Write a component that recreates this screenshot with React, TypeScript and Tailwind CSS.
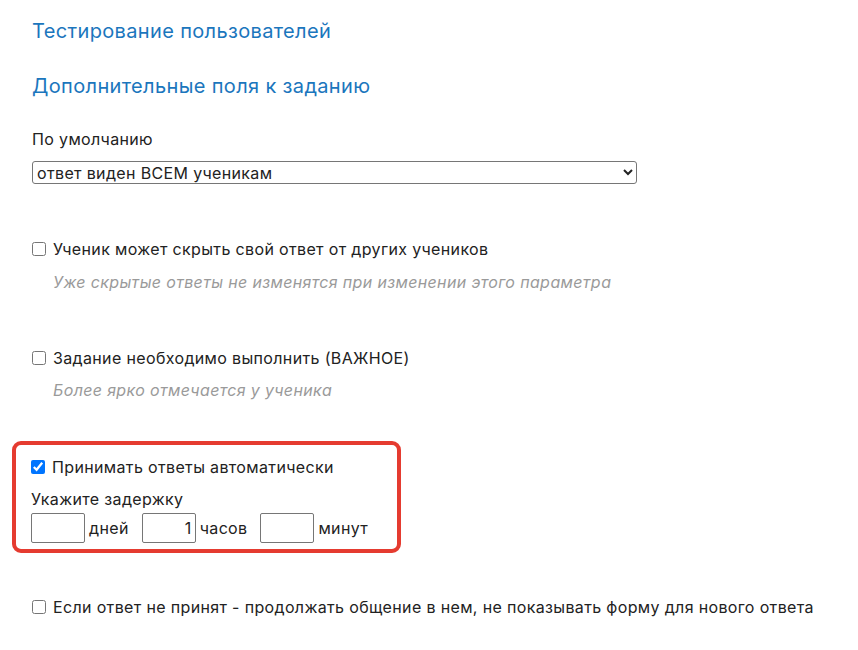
import { useState } from "react";

function Check({ label, checked, onChange }: { label: string; checked: boolean; onChange: (v: boolean) => void }) {
  return (
    <label className="flex items-center leading-[24px]">
      <input
        type="checkbox"
        checked={checked}
        onChange={(e) => onChange(e.target.checked)}
        className="w-[14px] h-[14px] mr-[7px] accent-[#0075ff]"
      />
      <span>{label}</span>
    </label>
  );
}

function Hint({ children }: { children: string }) {
  return <p className="pl-[21px] italic text-[#9a9a9a] leading-[24px]">{children}</p>;
}

export default function App() {
  const [canHide, setCanHide] = useState(false);
  const [important, setImportant] = useState(false);
  const [autoAccept, setAutoAccept] = useState(true);
  const [keepTalking, setKeepTalking] = useState(false);
  const [days, setDays] = useState("");
  const [hours, setHours] = useState("1");
  const [minutes, setMinutes] = useState("");

  return (
    <div className="min-h-[650px] bg-white text-[#222] text-[16px] tracking-[0.35px] pl-[32px] pt-[17px] font-['Inter','Noto_Sans',sans-serif]">
      <h2 className="text-[20px] leading-[28px] text-[#1b76bd]">Тестирование пользователей</h2>
      <h2 className="mt-[27px] text-[20px] leading-[28px] text-[#1b76bd]">Дополнительные поля к заданию</h2>

      <p className="mt-[27px] leading-[24px]">По умолчанию</p>
      <select className="mt-[10px] block w-[605px] h-[23px] border border-[#767676] rounded-[3px] pl-0 leading-[20px]">
        <option>ответ виден ВСЕМ ученикам</option>
        <option>ответ виден только учителю</option>
      </select>

      <div className="mt-[53px]">
        <Check label="Ученик может скрыть свой ответ от других учеников" checked={canHide} onChange={setCanHide} />
      </div>
      <div className="mt-[9px]">
        <Hint>Уже скрытые ответы не изменятся при изменении этого параметра</Hint>
      </div>

      <div className="mt-[52px]">
        <Check label="Задание необходимо выполнить (ВАЖНОЕ)" checked={important} onChange={setImportant} />
      </div>
      <div className="mt-[8px]">
        <Hint>Более ярко отмечается у ученика</Hint>
      </div>

      <div className="mt-[39px] -ml-[20px] w-[389px] border-4 border-[#e53b30] rounded-[9px] pl-[15px] pt-[10px] pb-[6px]">
        <Check label="Принимать ответы автоматически" checked={autoAccept} onChange={setAutoAccept} />
        <p className="mt-[8px] leading-[24px]">Укажите задержку</p>
        <div className="mt-[2px] flex items-center">
          <input
            value={days}
            onChange={(e) => setDays(e.target.value)}
            className="w-[54px] h-[30px] border border-[#767676] rounded-[2px] px-[3px] text-right"
          />
          <span className="ml-[4px] mr-[13px]">дней</span>
          <input
            value={hours}
            onChange={(e) => setHours(e.target.value)}
            className="w-[54px] h-[30px] border border-[#767676] rounded-[2px] px-[3px] text-right"
          />
          <span className="ml-[4px] mr-[13px]">часов</span>
          <input
            value={minutes}
            onChange={(e) => setMinutes(e.target.value)}
            className="w-[54px] h-[30px] border border-[#767676] rounded-[2px] px-[3px] text-right"
          />
          <span className="ml-[4px]">минут</span>
        </div>
      </div>

      <div className="mt-[42px]">
        <Check
          label="Если ответ не принят - продолжать общение в нем, не показывать форму для нового ответа"
          checked={keepTalking}
          onChange={setKeepTalking}
        />
      </div>
    </div>
  );
}
